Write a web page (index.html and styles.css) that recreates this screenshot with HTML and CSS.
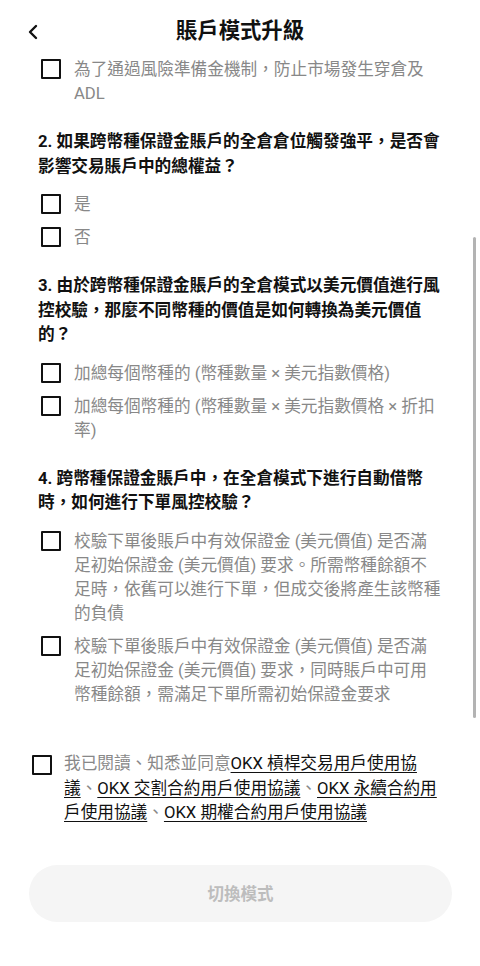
FILE: index.html
```html
<!DOCTYPE html>
<html lang="zh-Hant">
<head>
<meta charset="utf-8">
<title>賬戶模式升級</title>
<link rel="stylesheet" href="styles.css">
</head>
<body>
<div class="page">
  <header class="header">
    <svg class="back" width="14" height="16" viewBox="0 0 14 16" aria-hidden="true">
      <path d="M10 2 L4 8 L10 14" fill="none" stroke="#111" stroke-width="2.4" stroke-linecap="round" stroke-linejoin="round"/>
    </svg>
    <h1 class="title">賬戶模式升級</h1>
  </header>

  <main class="scroll">
    <div class="content">
      <div class="options first">
        <label class="option"><span class="box"></span><span class="opt-text">為了通過風險準備金機制，防止市場發生穿倉及ADL</span></label>
      </div>

      <div class="question">2. 如果跨幣種保證金賬戶的全倉倉位觸發強平，是否會影響交易賬戶中的總權益？</div>
      <div class="options">
        <label class="option"><span class="box"></span><span class="opt-text">是</span></label>
        <label class="option"><span class="box"></span><span class="opt-text">否</span></label>
      </div>

      <div class="question">3. 由於跨幣種保證金賬戶的全倉模式以美元價值進行風控校驗，那麼不同幣種的價值是如何轉換為美元價值的？</div>
      <div class="options">
        <label class="option"><span class="box"></span><span class="opt-text">加總每個幣種的 (幣種數量 × 美元指數價格)</span></label>
        <label class="option"><span class="box"></span><span class="opt-text">加總每個幣種的 (幣種數量 × 美元指數價格 × 折扣率)</span></label>
      </div>

      <div class="question">4. 跨幣種保證金賬戶中，在全倉模式下進行自動借幣時，如何進行下單風控校驗？</div>
      <div class="options">
        <label class="option"><span class="box"></span><span class="opt-text">校驗下單後賬戶中有效保證金 (美元價值) 是否滿足初始保證金 (美元價值) 要求。所需幣種餘額不足時，依舊可以進行下單，但成交後將產生該幣種的負債</span></label>
        <label class="option"><span class="box"></span><span class="opt-text">校驗下單後賬戶中有效保證金 (美元價值) 是否滿足初始保證金 (美元價值) 要求，同時賬戶中可用幣種餘額，需滿足下單所需初始保證金要求</span></label>
      </div>
    </div>
    <div class="scrollbar"></div>
  </main>

  <footer class="footer">
    <label class="agree"><span class="box"></span><span class="agree-text">我已閱讀、知悉並同意<a class="link">OKX 槓桿交易用戶使用協議</a>、<a class="link">OKX 交割合約用戶使用協議</a>、<a class="link">OKX 永續合約用戶使用協議</a>、<a class="link">OKX 期權合約用戶使用協議</a></span></label>
    <button class="switch" type="button">切換模式</button>
  </footer>
</div>
</body>
</html>
```

FILE: styles.css
```css
* { box-sizing: border-box; }

html, body {
  margin: 0;
  padding: 0;
  background: #fff;
}

body {
  font-family: "Roboto", "Noto Sans CJK TC", "Noto Sans", sans-serif;
  color: #111;
  text-spacing-trim: space-all;
}

.page {
  width: 480px;
  height: 966px;
  display: flex;
  flex-direction: column;
  overflow: hidden;
}

.header {
  height: 58px;
  flex: none;
  display: flex;
  align-items: center;
  justify-content: center;
  position: relative;
}

.back {
  position: absolute;
  left: 26px;
  top: 24px;
}

.title {
  margin: 4px 0 0 0;
  font-size: 21.33px;
  line-height: 30px;
  font-weight: 700;
  color: #111;
}

.scroll {
  height: 667px;
  flex: none;
  position: relative;
  overflow: hidden;
}

.content {
  padding: 0 38px 0 38px;
  display: flex;
  flex-direction: column;
}

.question {
  font-size: 16.67px;
  line-height: 24.5px;
  font-weight: 700;
  color: #111;
  margin-top: 24px;
}

.options {
  display: flex;
  flex-direction: column;
  gap: 9px;
  margin-top: 14px;
}

.options.first {
  margin-top: 0;
}

.option {
  display: flex;
  align-items: flex-start;
  gap: 13px;
  margin-left: 3px;
}

.box {
  flex: none;
  width: 20px;
  height: 20px;
  border: 2px solid #111;
  border-radius: 1px;
  margin-top: 1px;
}

.opt-text {
  font-size: 16.67px;
  line-height: 24px;
  color: #888;
}

.scrollbar {
  position: absolute;
  right: 4px;
  top: 179px;
  width: 3.5px;
  height: 481px;
  background: #b3b3b3;
  border-radius: 2px;
}

.footer {
  flex: none;
  padding: 27px 0 0 0;
  display: flex;
  flex-direction: column;
}

.agree {
  display: flex;
  align-items: flex-start;
  gap: 12px;
  padding: 0 36px 0 32px;
}

.agree .box {
  margin-top: 3px;
}

.agree-text {
  font-size: 16.67px;
  line-height: 24.5px;
  color: #888;
}

.link {
  color: #111;
  text-decoration: underline;
  text-underline-offset: 3px;
  text-decoration-thickness: 1px;
}

.switch {
  margin: 39px 28px 0 29px;
  height: 57px;
  border: none;
  border-radius: 29px;
  background: #f5f5f5;
  color: #bdbdbd;
  font-family: "Roboto", "Noto Sans CJK TC", sans-serif;
  font-size: 16.5px;
  font-weight: 700;
}
```
